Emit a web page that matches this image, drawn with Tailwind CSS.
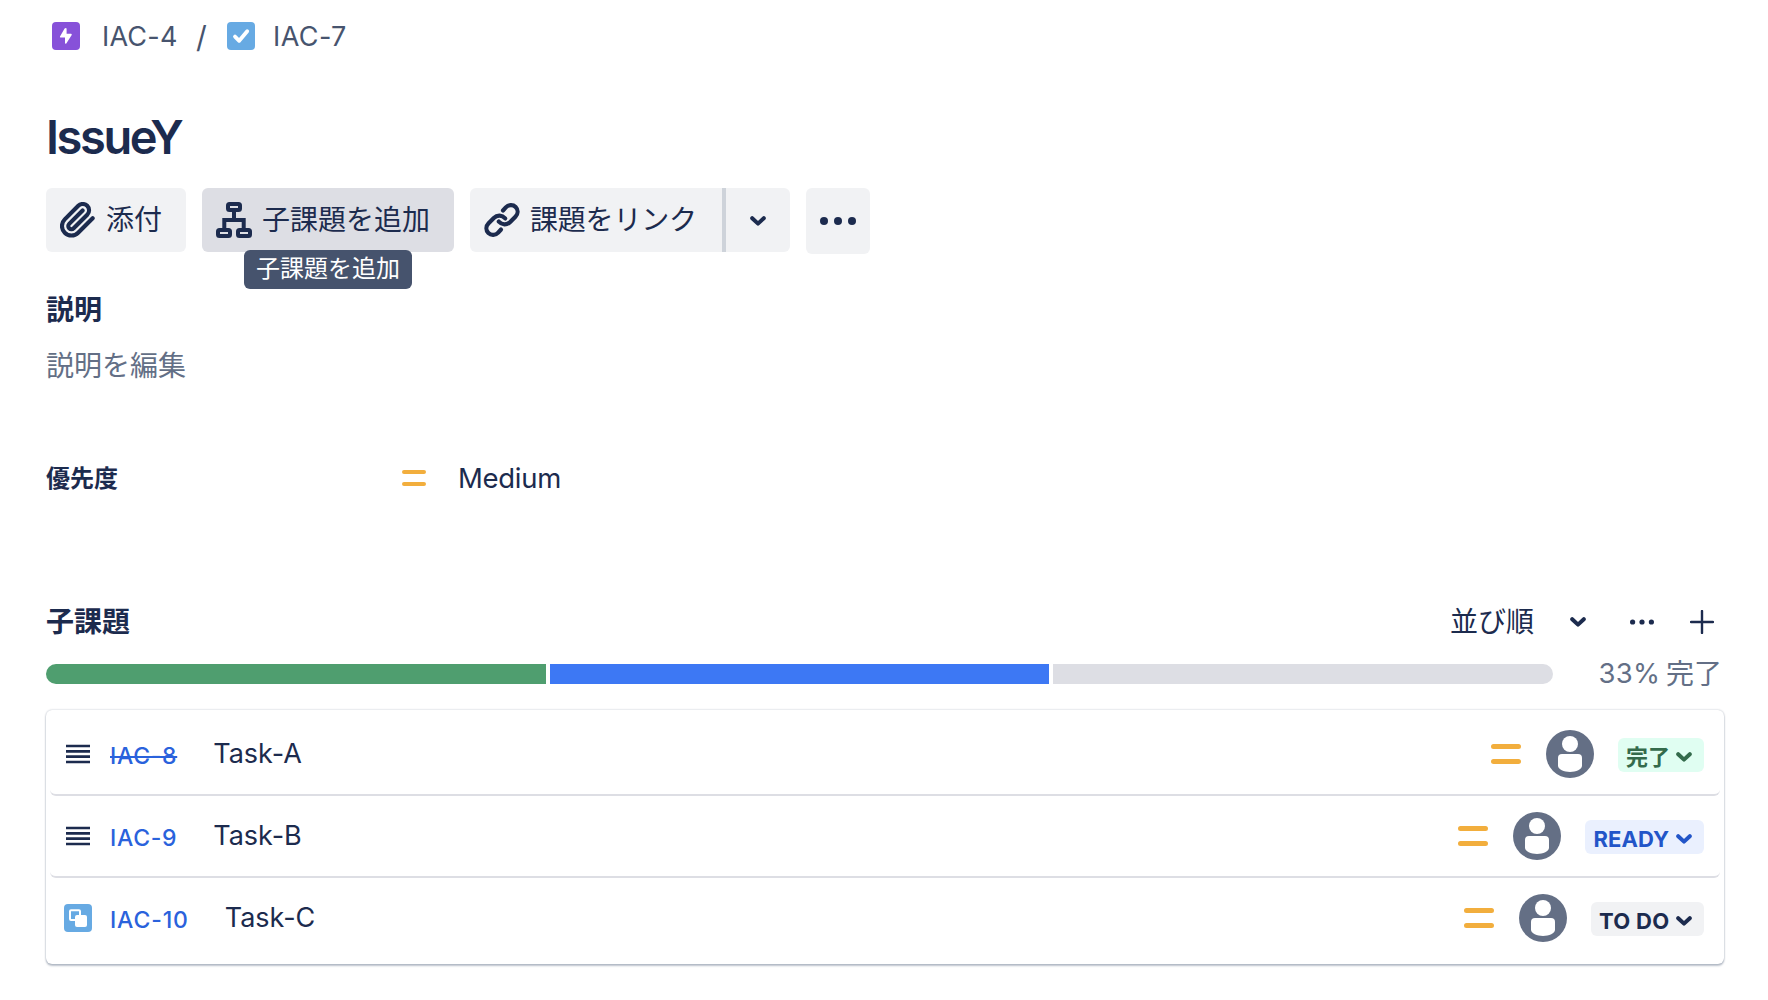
<!DOCTYPE html>
<html lang="ja">
<head>
<meta charset="utf-8">
<title>IAC-7 IssueY</title>
<script src="https://cdn.jsdelivr.net/npm/@tailwindcss/browser@4"></script>
</head>
<body class="bg-white font-['Inter','Noto_Sans_CJK_JP',sans-serif] text-[#1c2b4e]">
<svg class="hidden">
  <symbol id="chevron" viewBox="0 0 16 10"><path d="M2.2 2.2 8 7.6l5.800-5.400" fill="none" stroke="currentColor" stroke-width="4" stroke-linecap="round" stroke-linejoin="round"/></symbol>
  <symbol id="lines" viewBox="0 0 24 20"><path d="M0 2h24M0 7.400h24M0 12.600h24M0 18h24" stroke="currentColor" stroke-width="2.600"/></symbol>
  <symbol id="avatar" viewBox="0 0 48 48"><circle cx="24" cy="24" r="24" fill="#646f85"/><circle cx="24" cy="14" r="8" fill="#fff"/><path d="M12 28a4 4 0 0 1 4-4h16a4 4 0 0 1 4 4v7.600c0 4-6 6.400-12 6.400s-12-2.400-12-6.400z" fill="#fff"/></symbol>
  <symbol id="medium" viewBox="0 0 30 20"><path d="M2.500 2.500h25M2.500 17.500h25" stroke="#f2ae3d" stroke-width="5" stroke-linecap="round"/></symbol>
</svg>
<main class="w-[1724px] min-h-screen pl-[46px] pt-[22px] flex flex-col">
  <nav class="flex items-center h-7 pl-1.5 text-[27px] leading-7 text-[#47546e]">
    <svg class="size-7" viewBox="0 0 28 28"><rect width="28" height="28" rx="4" fill="#8751d9"/><path d="M12.600 6.400 8 14.600q-.4 1 .6 1h4.400v5.400q.2 1 1.300.4L19.700 13q.4-1-.6-1.200H14.600V6.600q-.6-1.200-2-.2z" fill="#fff"/></svg>
    <span class="ml-[22px] mt-0.5 w-[94px] tracking-[0.200px]">IAC-4</span>
    <span class="w-[31px] mt-0.5 text-[30px]">/</span>
    <svg class="size-7" viewBox="0 0 28 28"><rect width="28" height="28" rx="4" fill="#67aae3"/><path d="m8 14.600 4.200 4.200 8-9.600" fill="none" stroke="#fff" stroke-width="3.800" stroke-linecap="round" stroke-linejoin="round"/></svg>
    <span class="ml-[18px] mt-0.5 tracking-[0.400px]">IAC-7</span>
  </nav>

  <h1 class="mt-[57px] h-[60px] text-[47px] leading-[60px] font-semibold tracking-[-2.400px]">IssueY</h1>

  <div class="mt-[21px] h-[66px] flex items-start gap-4 text-[28px] leading-[64px]">
    <button class="w-[140px] h-16 pl-3.5 rounded-md bg-[#f1f2f4] flex items-center">
      <svg class="size-9" viewBox="0 0 36 36"><path transform="translate(-1.200 -1.200) scale(1.580)" d="m21.440 11.050-9.190 9.190a6 6 0 0 1-8.490-8.490l8.570-8.570A4 4 0 1 1 18 8.840l-8.590 8.570a2 2 0 0 1-2.830-2.830l8.490-8.480" fill="none" stroke="currentColor" stroke-width="2.600" stroke-linecap="round" stroke-linejoin="round"/></svg>
      <span class="ml-2.5">添付</span>
    </button>
    <div class="relative">
      <button class="w-[252px] h-16 pl-3.5 rounded-md bg-[#dddee4] flex items-center">
        <svg class="size-9" viewBox="0 0 36 36" fill="none" stroke="currentColor" stroke-width="4"><rect x="12" y="2" width="12" height="6" rx="1.500"/><rect x="2" y="28" width="12" height="6" rx="1.500"/><rect x="22" y="28" width="12" height="6" rx="1.500"/><path d="M18 9v9M8.300 27v-9h19.400v9"/></svg>
        <span class="ml-2.5">子課題を追加</span>
      </button>
      <div class="absolute left-[42px] top-[62px] w-[168px] h-[39px] rounded-md bg-[#46536d] text-white text-[24px] leading-[38px] text-center">子課題を追加</div>
    </div>
    <div class="flex">
      <button class="w-[252px] h-16 pl-3.5 rounded-l-md bg-[#f1f2f4] flex items-center">
        <svg class="size-9" viewBox="0 0 36 36" fill="none" stroke="currentColor" stroke-width="4.200" stroke-linecap="round"><path d="M19 8.500 21.800 5.400C24.500 2.500 29 2.400 31.600 5c2.700 2.700 2.700 6.800-.2 9.700l-5.200 5.300C22.700 23.400 18 23 14.800 19.600"/><path transform="rotate(180 18 18)" d="M19 8.500 21.800 5.400C24.500 2.500 29 2.400 31.600 5c2.700 2.700 2.700 6.800-.2 9.700l-5.200 5.300C22.700 23.400 18 23 14.800 19.600"/></svg>
        <span class="ml-[10px] tracking-[-0.200px]">課題をリンク</span>
      </button>
      <button class="w-[68px] h-16 border-l-4 border-[#ced3da] rounded-r-md bg-[#f1f2f4] flex items-center justify-center"><svg class="w-4 h-2.5 mt-0.5"><use href="#chevron"/></svg></button>
    </div>
    <button class="w-16 h-[66px] rounded-md bg-[#f1f2f4] flex items-center justify-center gap-[5.600px]">
      <i class="size-[8.400px] rounded-full bg-[#1c2b4e]"></i><i class="size-[8.400px] rounded-full bg-[#1c2b4e]"></i><i class="size-[8.400px] rounded-full bg-[#1c2b4e]"></i>
    </button>
  </div>

  <h2 class="mt-9 text-[28px] leading-10 font-bold">説明</h2>
  <p class="mt-4 text-[28px] leading-10 text-[#636f86]">説明を編集</p>

  <div class="mt-[72px] h-10 flex items-center">
    <h3 class="w-[356px] mt-px text-[24px] font-bold">優先度</h3>
    <svg class="w-6 h-4" viewBox="0 0 24 16"><path d="M2 2h20M2 14h20" stroke="#f2ae3d" stroke-width="4" stroke-linecap="round"/></svg>
    <span class="ml-8 mt-0.5 text-[27.500px] tracking-[-0.300px]">Medium</span>
  </div>

  <div class="mt-[104px] h-10 pr-2.5 flex items-center text-[28px]">
    <h2 class="font-bold">子課題</h2>
    <span class="ml-auto">並び順</span>
    <svg class="ml-9 w-4 h-2.5"><use href="#chevron"/></svg>
    <svg class="ml-11 w-6 h-6" viewBox="0 0 24 24" fill="currentColor"><circle cx="2.600" cy="12" r="2.600"/><circle cx="12" cy="12" r="2.600"/><circle cx="21.400" cy="12" r="2.600"/></svg>
    <svg class="ml-9 w-6 h-6" viewBox="0 0 24 24"><path d="M12 1v22M1 12h22" stroke="currentColor" stroke-width="2.400" stroke-linecap="round"/></svg>
  </div>

  <div class="mt-3 h-10 flex items-center text-[#636f86]">
    <div class="w-[1507px] h-5 flex gap-1 rounded-full overflow-hidden">
      <i class="flex-1 bg-[#4f9e6f]"></i><i class="flex-1 bg-[#3d78f4]"></i><i class="flex-1 bg-[#dddee4]"></i>
    </div>
    <span class="ml-[45.500px] w-[67.500px] text-[27.500px] tracking-[0.300px]">33%</span><span class="text-[28px]">完了</span>
  </div>

  <ul class="mt-4 h-[254px] p-1 rounded-md shadow-[0_2px_2px_rgba(9,30,66,0.25),0_0_2px_rgba(9,30,66,0.31)]">
    <li class="h-[82px] pl-3.5 pr-4 flex items-center border-b-2 border-[#dddee4] rounded-md">
      <svg class="mx-0.5 w-6 h-5"><use href="#lines"/></svg>
      <a class="ml-[18px] mt-[5px] text-[23px] font-medium tracking-[0.700px] text-[#2a62dc] line-through decoration-2">IAC-8</a>
      <span class="ml-9 mt-px text-[27px]">Task-A</span>
      <svg class="ml-auto w-[30px] h-5"><use href="#medium"/></svg>
      <svg class="ml-[25px] size-12"><use href="#avatar"/></svg>
      <span class="ml-6 mt-0.5 w-[86px] h-[34px] pl-2 pr-3 pt-1 rounded-md bg-[#e0fef2] text-[#346b4c] text-[22px] leading-[30px] font-bold flex items-center justify-between">完了<svg class="w-4 h-2.5"><use href="#chevron"/></svg></span>
    </li>
    <li class="h-[82px] pl-3.5 pr-4 flex items-center border-b-2 border-[#dddee4] rounded-md">
      <svg class="mx-0.5 w-6 h-5"><use href="#lines"/></svg>
      <a class="ml-[18px] mt-[5px] text-[23px] font-medium tracking-[0.700px] text-[#2a62dc]">IAC-9</a>
      <span class="ml-9 mt-px text-[27px]">Task-B</span>
      <svg class="ml-auto w-[30px] h-5"><use href="#medium"/></svg>
      <svg class="ml-[25px] size-12"><use href="#avatar"/></svg>
      <span class="ml-6 mt-0.5 w-[119px] h-[34px] pl-[8.500px] pr-3 pt-1 rounded-md bg-[#eaf0fe] text-[#2255c8] text-[22px] leading-[30px] font-bold tracking-[0.100px] flex items-center justify-between">READY<svg class="w-4 h-2.5"><use href="#chevron"/></svg></span>
    </li>
    <li class="h-[80px] pl-3.5 pr-4 flex items-center">
      <svg class="size-7" viewBox="0 0 28 28"><rect width="28" height="28" rx="4" fill="#67aae3"/><rect x="6" y="6.200" width="10" height="9.800" rx="1" fill="none" stroke="#fff" stroke-width="2"/><rect x="11" y="11" width="12" height="12" rx="2" fill="#fff"/></svg>
      <a class="ml-[18px] mt-[5px] text-[23px] font-medium tracking-[0.850px] text-[#2a62dc]">IAC-10</a>
      <span class="ml-9 mt-px text-[27px]">Task-C</span>
      <svg class="ml-auto w-[30px] h-5"><use href="#medium"/></svg>
      <svg class="ml-[25px] size-12"><use href="#avatar"/></svg>
      <span class="ml-6 mt-0.5 w-[113px] h-[34px] pl-2 pr-3 pt-1 rounded-md bg-[#f1f2f4] text-[22px] leading-[30px] font-bold tracking-[0.300px] flex items-center justify-between whitespace-nowrap">TO DO<svg class="w-4 h-2.5"><use href="#chevron"/></svg></span>
    </li>
  </ul>
</main>
</body>
</html>
